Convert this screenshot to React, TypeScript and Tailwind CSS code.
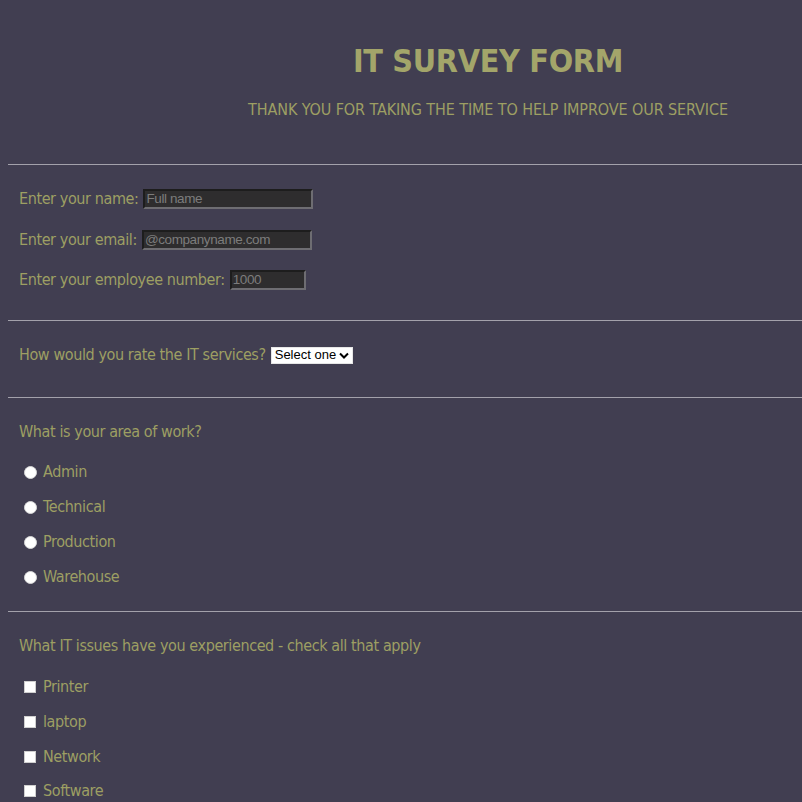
import React from "react";

const font = { fontFamily: '"DejaVu Sans Condensed", "DejaVu Sans", Tahoma, sans-serif' };

function TextInput({ placeholder, width }: { placeholder: string; width: string }) {
  return (
    <input
      placeholder={placeholder}
      className={`${width} h-[20px] bg-[#2e2d2e] border-2 border-t-[#1d1d1d] border-l-[#1d1d1d] border-b-[#6e6d72] border-r-[#6e6d72] px-[1px] text-[13.5px] text-[#bbbbbb] placeholder:text-[#7c7c7c] outline-none`}
      style={{ fontFamily: '"Liberation Sans", Arial, sans-serif' }}
    />
  );
}

function Radio({ label, className }: { label: string; className: string }) {
  return (
    <div className={`flex h-[20px] items-center ${className}`}>
      <span className="ml-[16px] mr-[6px] block h-[13px] w-[13px] rounded-full bg-white border border-[#d8d8d8]" />
      <span>{label}</span>
    </div>
  );
}

function Check({ label, className }: { label: string; className: string }) {
  return (
    <div className={`flex h-[20px] items-center ${className}`}>
      <span className="ml-[16px] mr-[7px] block h-[12px] w-[12px] bg-white border border-[#cfcfcf]" />
      <span>{label}</span>
    </div>
  );
}

function Hr({ className }: { className: string }) {
  return <div className={`h-[1px] bg-[#a3a1ab] ${className}`} />;
}

export default function App() {
  return (
    <div className="min-h-screen overflow-hidden bg-[#413e51] pl-[8px] pb-[40px] text-[16px] text-[#9d9f63]" style={font}>
      <div className="w-[960px]">
        <div className="flex h-[42px] mt-[40px] items-center justify-center text-[32px] tracking-[-0.3px] font-bold text-[#a3a56a]">
          IT SURVEY FORM
        </div>
        <div className="flex h-[20px] mt-[18px] items-center justify-center tracking-[-0.1px]">
          THANK YOU FOR TAKING THE TIME TO HELP IMPROVE OUR SERVICE
        </div>
        <Hr className="mt-[44px]" />
        <div className="pl-[11px] tracking-[-0.4px]">
          <div className="flex h-[20px] mt-[24px] items-center gap-[5px]">
            <span>Enter your name:</span>
            <TextInput placeholder="Full name" width="w-[170px]" />
          </div>
          <div className="flex h-[20px] mt-[21px] items-center gap-[5px]">
            <span>Enter your email:</span>
            <TextInput placeholder="@companyname.com" width="w-[170px]" />
          </div>
          <div className="flex h-[20px] mt-[20px] items-center gap-[5px]">
            <span>Enter your employee number:</span>
            <TextInput placeholder="1000" width="w-[76px]" />
          </div>
        </div>
        <Hr className="mt-[30px]" />
        <div className="pl-[11px] tracking-[-0.4px]">
          <div className="flex h-[20px] mt-[24px] items-center gap-[5px]">
            <span>How would you rate the IT services?</span>
            <div
              className="flex h-[17px] items-center gap-[3px] bg-white border border-[#e6e6e6] pl-[3px] pr-[3px] text-[13px] tracking-normal text-black"
              style={{ fontFamily: '"Liberation Sans", Arial, sans-serif' }}
            >
              <span>Select one</span>
              <svg width="10" height="7" viewBox="0 0 10 7">
                <path d="M1 1.5 L5 5.5 L9 1.5" fill="none" stroke="#000" strokeWidth="2" />
              </svg>
            </div>
          </div>
        </div>
        <Hr className="mt-[32px]" />
        <div className="tracking-[-0.4px]">
          <div className="pl-[11px] flex h-[20px] mt-[24px] items-center">What is your area of work?</div>
          <Radio label="Admin" className="mt-[20px]" />
          <Radio label="Technical" className="mt-[15px]" />
          <Radio label="Production" className="mt-[15px]" />
          <Radio label="Warehouse" className="mt-[15px]" />
        </div>
        <Hr className="mt-[24px]" />
        <div className="tracking-[-0.4px]">
          <div className="pl-[11px] flex h-[20px] mt-[24px] items-center">What IT issues have you experienced - check all that apply</div>
          <Check label="Printer" className="mt-[21px]" />
          <Check label="laptop" className="mt-[15px]" />
          <Check label="Network" className="mt-[15px]" />
          <Check label="Software" className="mt-[14px]" />
        </div>
      </div>
    </div>
  );
}
